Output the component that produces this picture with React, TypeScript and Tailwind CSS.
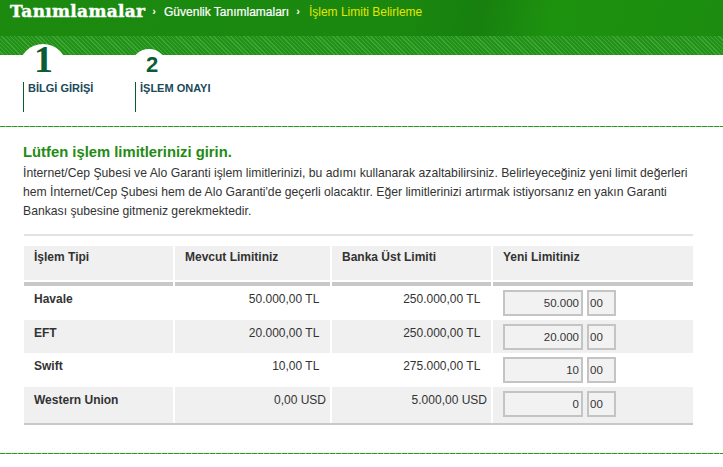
import React from "react";

const steps = [
  {
    n: "1",
    label: "BİLGİ GİRİŞİ",
    circle: "left-[-4px] top-[-11px] h-[48px] w-[48px]",
    num: "left-[11px] top-[-9px] font-['Liberation_Serif',serif] text-[38px] leading-[26px]",
  },
  {
    n: "2",
    label: "İŞLEM ONAYI",
    circle: "left-[-4px] top-[-6px] h-[36px] w-[36px]",
    num: "left-[11px] top-[2px] font-['Liberation_Sans',Arial,sans-serif] text-[22px] leading-[16px]",
  },
];

const rows = [
  { name: "Havale", current: "50.000,00 TL\u00a0\u00a0", max: "250.000,00 TL\u00a0\u00a0", value: "50.000", bg: "bg-white", h: "h-[34px]" },
  { name: "EFT", current: "20.000,00 TL\u00a0\u00a0", max: "250.000,00 TL\u00a0\u00a0", value: "20.000", bg: "bg-[#f0f0f0]", h: "h-[33px]" },
  { name: "Swift", current: "10,00 TL\u00a0\u00a0", max: "275.000,00 TL\u00a0\u00a0", value: "10", bg: "bg-white", h: "h-[34px]" },
  { name: "Western Union", current: "0,00 USD", max: "5.000,00 USD", value: "0", bg: "bg-[#f0f0f0]", h: "h-[36px]" },
];

const cols = "grid grid-cols-[149px_155px_159px_200px] gap-x-[2px]";

export default function App() {
  return (
    <div className="h-[467px] w-[723px] overflow-hidden bg-white font-['Liberation_Sans',Arial,sans-serif] text-[#333]">
      {/* Top bar */}
      <div className="flex h-[36px] items-start bg-[linear-gradient(100deg,#1b8a0f_0%,#1a880f_55%,#17800f_66%,#1d920f_76%,#1b8c0f_100%)] pl-[10px] pt-[1px]">
        <span className="font-['DejaVu_Serif',serif] text-[17px] font-bold leading-[20px] tracking-[0.3px] text-white [-webkit-text-stroke:0.4px_white]">
          Tanımlamalar
        </span>
        <span className="ml-[7px] mt-[3px] text-[11px] font-bold leading-[14px] text-white">›</span>
        <span className="ml-[8px] mt-[4px] text-[12px] leading-[14px] text-white [-webkit-text-stroke:0.2px_white]">
          Güvenlik Tanımlamaları
        </span>
        <span className="ml-[7px] mt-[3px] text-[11px] font-bold leading-[14px] text-white">›</span>
        <span className="ml-[9px] mt-[4px] text-[12px] leading-[14px] text-[#e4e600]">İşlem Limiti Belirleme</span>
      </div>
      <div className="h-[19px] bg-[repeating-linear-gradient(45deg,#22921a_0px,#22921a_2px,#3fa533_2px,#3fa533_3px)]" />

      {/* Steps */}
      <div className="flex h-[71px]">
        {steps.map((s, i) => (
          <div key={s.n} className={`relative w-[112px] ${i === 0 ? "ml-[23px]" : ""}`}>
            <div className={`absolute rounded-full bg-white ${s.circle}`} />
            <span className={`absolute font-bold text-[#0b5c34] ${s.num}`}>{s.n}</span>
            <div className="relative mt-[27px] h-[30px] border-l border-[#0b5c34] pl-[4px] text-[11px] font-bold leading-[13px] text-[#1b4a5a]">
              {s.label}
            </div>
          </div>
        ))}
      </div>
      <div className="h-px bg-[repeating-linear-gradient(90deg,#2a9a1c_0px,#2a9a1c_5px,#8fce84_5px,#8fce84_6px)]" />

      {/* Content */}
      <div className="pl-[23px] pt-[17px]">
        <h2 className="text-[14.8px] font-bold leading-[16px] text-[#238b12]">Lütfen işlem limitlerinizi girin.</h2>
        <p className="mt-[4px] whitespace-nowrap text-[12.2px] leading-[19px] text-[#333]">
          İnternet/Cep Şubesi ve Alo Garanti işlem limitlerinizi, bu adımı kullanarak azaltabilirsiniz. Belirleyeceğiniz yeni limit değerleri
          <br />
          hem İnternet/Cep Şubesi hem de Alo Garanti'de geçerli olacaktır. Eğer limitlerinizi artırmak istiyorsanız en yakın Garanti
          <br />
          Bankası şubesine gitmeniz gerekmektedir.
        </p>

        {/* Table */}
        <div className="ml-px mt-[13px] w-[669px]">
          <div className="h-[2px] bg-[#e2e2e2]" />
          <div className={`${cols} mt-[10px] h-[34px] text-[12px] font-bold leading-[14px]`}>
            {["İşlem Tipi", "Mevcut Limitiniz", "Banka Üst Limiti", "Yeni Limitiniz"].map((h) => (
              <div key={h} className="bg-[#f0f0f0] pl-[10px] pt-[4px]">
                {h}
              </div>
            ))}
          </div>
          <div className={`${cols} mt-[2px] h-[4px]`}>
            {[0, 1, 2, 3].map((k) => (
              <div key={k} className="bg-[#c8c8c8]" />
            ))}
          </div>
          {rows.map((r) => (
            <div key={r.name} className={`${cols} ${r.h} text-[12px] leading-[14px]`}>
              <div className={`${r.bg} pl-[10px] pt-[6px] font-bold`}>{r.name}</div>
              <div className={`${r.bg} pr-[4px] pt-[6px] text-right`}>{r.current}</div>
              <div className={`${r.bg} pr-[4px] pt-[6px] text-right`}>{r.max}</div>
              <div className={`${r.bg} flex items-start gap-[4px] pl-[10px] pt-[4px]`}>
                <input
                  readOnly
                  value={r.value}
                  className="h-[26px] w-[80px] border-2 border-[#c4c4c4] bg-[#f2f2f2] pr-[2px] text-right text-[11.5px] text-[#333] outline-none"
                />
                <input
                  readOnly
                  value="00"
                  className="h-[26px] w-[29px] border-2 border-[#c4c4c4] bg-[#f2f2f2] pl-[1px] text-[11.5px] text-[#333] outline-none"
                />
              </div>
            </div>
          ))}
          <div className="h-[2px] bg-[#c8c8c8]" />
        </div>
      </div>
      <div className="mt-[28px] h-px bg-[repeating-linear-gradient(90deg,#2a9a1c_0px,#2a9a1c_5px,#8fce84_5px,#8fce84_6px)]" />
    </div>
  );
}
